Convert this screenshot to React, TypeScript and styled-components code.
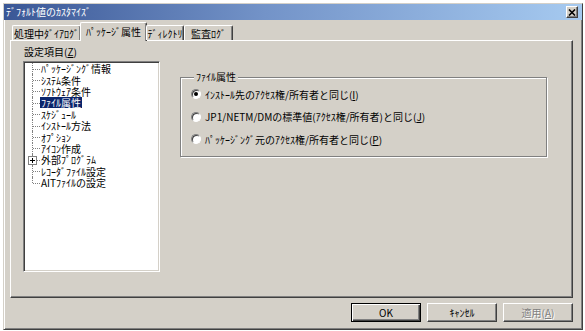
import React from "react";
import styled, { createGlobalStyle } from "styled-components";

const Global = createGlobalStyle`
  html, body { margin: 0; padding: 0; background: #ffffff; }
  body { font-family: "Noto Sans CJK JP", "Noto Sans", sans-serif; font-size: 10px; color: #000; }
  * { box-sizing: border-box; }
`;

const Dialog = styled.div`
  margin: 3px 0 0 3px;
  width: 580px;
  height: 327px;
  background: #d4d0c8;
  border: 1px solid;
  border-color: #d4d0c8 #404040 #404040 #d4d0c8;
  box-shadow: inset 1px 1px 0 #ffffff, inset -1px -1px 0 #808080;
  display: flex;
  flex-direction: column;
`;

const TitleBar = styled.div`
  height: 16px;
  display: flex;
  align-items: center;
  justify-content: space-between;
  padding: 0 4px 0 2px;
  background: linear-gradient(to right, #3a5796 0%, #7393c8 45%, #a6caf0 100%);
  color: #ffffff;
  font-size: 10px;
  line-height: 16px;
  white-space: nowrap;
`;

const CloseBtn = styled.div`
  width: 12px;
  height: 12px;
  background: #d4d0c8;
  border: 1px solid;
  border-color: #ffffff #404040 #404040 #ffffff;
  box-shadow: inset -1px -1px 0 #808080;
  display: flex;
  align-items: center;
  justify-content: center;
`;

const Body = styled.div`
  flex: 1;
  display: flex;
  flex-direction: column;
  padding: 2px 9px 0 6px;
`;

const TabStrip = styled.div`
  height: 18px;
  display: flex;
  align-items: flex-end;
  padding-left: 2px;
  position: relative;
  z-index: 1;
`;

const Tab = styled.div<{ $w: number; $sel?: boolean }>`
  width: ${(p) => p.$w}px;
  height: ${(p) => (p.$sel ? 19 : 15)}px;
  margin-bottom: ${(p) => (p.$sel ? -1 : 0)}px;
  margin-left: ${(p) => (p.$sel ? -1 : 0)}px;
  margin-right: ${(p) => (p.$sel ? -1 : 0)}px;
  background: #d4d0c8;
  border-top: 1px solid #ffffff;
  border-left: 1px solid #ffffff;
  border-right: 1px solid #404040;
  box-shadow: inset -1px 0 0 #808080;
  border-radius: 2px 2px 0 0;
  display: flex;
  align-items: ${(p) => (p.$sel ? "flex-start" : "center")};
  padding-top: ${(p) => (p.$sel ? 2 : 0)}px;
  justify-content: center;
  font-size: 10px;
  line-height: 13px;
  white-space: nowrap;
`;

const Panel = styled.div`
  height: 258px;
  border: 1px solid;
  border-color: #ffffff #404040 #404040 #ffffff;
  box-shadow: inset -1px -1px 0 #808080;
  display: flex;
  align-items: flex-start;
  padding: 4px 0 0 12px;
  gap: 20px;
`;

const LeftCol = styled.div`
  display: flex;
  flex-direction: column;
  gap: 3px;
`;

const Label = styled.div`
  height: 13px;
  line-height: 13px;
  padding-left: 1px;
  white-space: nowrap;
`;

const U = styled.span`
  text-decoration: underline;
  text-underline-offset: 1px;
`;

const ListBox = styled.div`
  width: 137px;
  height: 211px;
  background: #ffffff;
  border: 1px solid;
  border-color: #808080 #ffffff #ffffff #808080;
  box-shadow: inset 1px 1px 0 #404040, inset -1px -1px 0 #d4d0c8;
  padding: 1px 0 0 1px;
  display: flex;
  flex-direction: column;
`;

const TreeRow = styled.div`
  height: 11.4px;
  display: flex;
  align-items: center;
  white-space: nowrap;
`;

const Connector = styled.span<{ $last?: boolean }>`
  position: relative;
  width: 15px;
  height: 100%;
  flex: none;
  &::before {
    content: "";
    position: absolute;
    left: 7px;
    top: 0;
    height: ${(p) => (p.$last ? "50%" : "100%")};
    border-left: 1px dotted #808080;
  }
  &::after {
    content: "";
    position: absolute;
    left: 8px;
    top: 50%;
    width: 7px;
    border-top: 1px dotted #808080;
  }
`;

const PlusBox = styled.span`
  position: absolute;
  left: 3px;
  top: calc(50% - 4px);
  width: 9px;
  height: 9px;
  background: #ffffff;
  border: 1px solid #808080;
  z-index: 1;
  display: flex;
  align-items: center;
  justify-content: center;
`;

const ItemText = styled.span<{ $sel?: boolean }>`
  display: inline-block;
  height: 11px;
  padding: 0 1px;
  line-height: 11px;
  overflow: visible;
  background: ${(p) => (p.$sel ? "#0a246a" : "transparent")};
  color: ${(p) => (p.$sel ? "#ffffff" : "#000000")};
`;

const Group = styled.fieldset`
  margin: 26px 0 0 0;
  width: 367px;
  height: 86px;
  border: 1px solid #808080;
  box-shadow: 1px 1px 0 #ffffff, inset 1px 1px 0 #ffffff;
  padding: 0 0 0 10px;
  display: flex;
  flex-direction: column;
`;

const Legend = styled.legend`
  padding: 0 2px;
  margin-left: 3px;
  line-height: 12px;
  background: #d4d0c8;
`;

const RadioRow = styled.div`
  height: 22.5px;
  display: flex;
  align-items: center;
  gap: 4px;
  white-space: nowrap;
`;

const Radio = styled.span<{ $on?: boolean }>`
  width: 10px;
  height: 10px;
  border-radius: 50%;
  border: 1px solid;
  border-color: #808080 #ffffff #ffffff #808080;
  background: #ffffff;
  box-shadow: inset 1px 1px 0 #404040;
  display: flex;
  align-items: center;
  justify-content: center;
  flex: none;
  &::after {
    content: "";
    width: 4px;
    height: 4px;
    border-radius: 50%;
    background: ${(p) => (p.$on ? "#000000" : "transparent")};
  }
`;

const Footer = styled.div`
  display: flex;
  justify-content: flex-end;
  gap: 6px;
  padding-top: 5px;
`;

const Button = styled.div<{ $default?: boolean; $disabled?: boolean }>`
  width: 70px;
  height: 19px;
  background: #d4d0c8;
  border: 1px solid;
  border-color: ${(p) => (p.$default ? "#000000" : "#ffffff #404040 #404040 #ffffff")};
  box-shadow: ${(p) =>
    p.$default
      ? "inset 1px 1px 0 #ffffff, inset -1px -1px 0 #404040, inset -2px -2px 0 #808080"
      : "inset -1px -1px 0 #808080"};
  display: flex;
  align-items: center;
  justify-content: center;
  font-size: 10px;
  color: ${(p) => (p.$disabled ? "#808080" : "#000000")};
  text-shadow: ${(p) => (p.$disabled ? "1px 1px 0 #ffffff" : "none")};
`;

const items = [
  "ﾊﾟｯｹｰｼﾞﾝｸﾞ情報",
  "ｼｽﾃﾑ条件",
  "ｿﾌﾄｳｪｱ条件",
  "ﾌｧｲﾙ属性",
  "ｽｹｼﾞｭｰﾙ",
  "ｲﾝｽﾄｰﾙ方法",
  "ｵﾌﾟｼｮﾝ",
  "ｱｲｺﾝ作成",
  "外部ﾌﾟﾛｸﾞﾗﾑ",
  "ﾚｺｰﾀﾞﾌｧｲﾙ設定",
  "AITﾌｧｲﾙの設定",
];

export default function App() {
  return (
    <>
      <Global />
      <Dialog>
        <TitleBar>
          <span>ﾃﾞﾌｫﾙﾄ値のｶｽﾀﾏｲｽﾞ</span>
          <CloseBtn>
            <svg width="8" height="7" viewBox="0 0 8 7">
              <path d="M1 0.5 L7 6.5 M7 0.5 L1 6.5" stroke="#000" strokeWidth="1.6" />
            </svg>
          </CloseBtn>
        </TitleBar>
        <Body>
          <TabStrip>
            <Tab $w={69}>処理中ﾀﾞｲｱﾛｸﾞ</Tab>
            <Tab $w={67} $sel>ﾊﾟｯｹｰｼﾞ属性</Tab>
            <Tab $w={38}>ﾃﾞｨﾚｸﾄﾘ</Tab>
            <Tab $w={49}>監査ﾛｸﾞ</Tab>
          </TabStrip>
          <Panel>
            <LeftCol>
              <Label>
                設定項目(<U>Z</U>)
              </Label>
              <ListBox>
                {items.map((t, i) => (
                  <TreeRow key={t}>
                    <Connector $last={i === items.length - 1}>
                      {i === 8 && (
                        <PlusBox>
                          <svg width="7" height="7" viewBox="0 0 7 7">
                            <path d="M1 3.5 H6 M3.5 1 V6" stroke="#000" strokeWidth="1" />
                          </svg>
                        </PlusBox>
                      )}
                    </Connector>
                    <ItemText $sel={i === 3}>{t}</ItemText>
                  </TreeRow>
                ))}
              </ListBox>
            </LeftCol>
            <Group>
              <Legend>ﾌｧｲﾙ属性</Legend>
              <RadioRow>
                <Radio $on />
                <span>
                  ｲﾝｽﾄｰﾙ先のｱｸｾｽ権/所有者と同じ(<U>I</U>)
                </span>
              </RadioRow>
              <RadioRow>
                <Radio />
                <span>
                  JP1/NETM/DMの標準値(ｱｸｾｽ権/所有者)と同じ(<U>J</U>)
                </span>
              </RadioRow>
              <RadioRow>
                <Radio />
                <span>
                  ﾊﾟｯｹｰｼﾞﾝｸﾞ元のｱｸｾｽ権/所有者と同じ(<U>P</U>)
                </span>
              </RadioRow>
            </Group>
          </Panel>
          <Footer>
            <Button $default>OK</Button>
            <Button>ｷｬﾝｾﾙ</Button>
            <Button $disabled>
              適用(<U>A</U>)
            </Button>
          </Footer>
        </Body>
      </Dialog>
    </>
  );
}
